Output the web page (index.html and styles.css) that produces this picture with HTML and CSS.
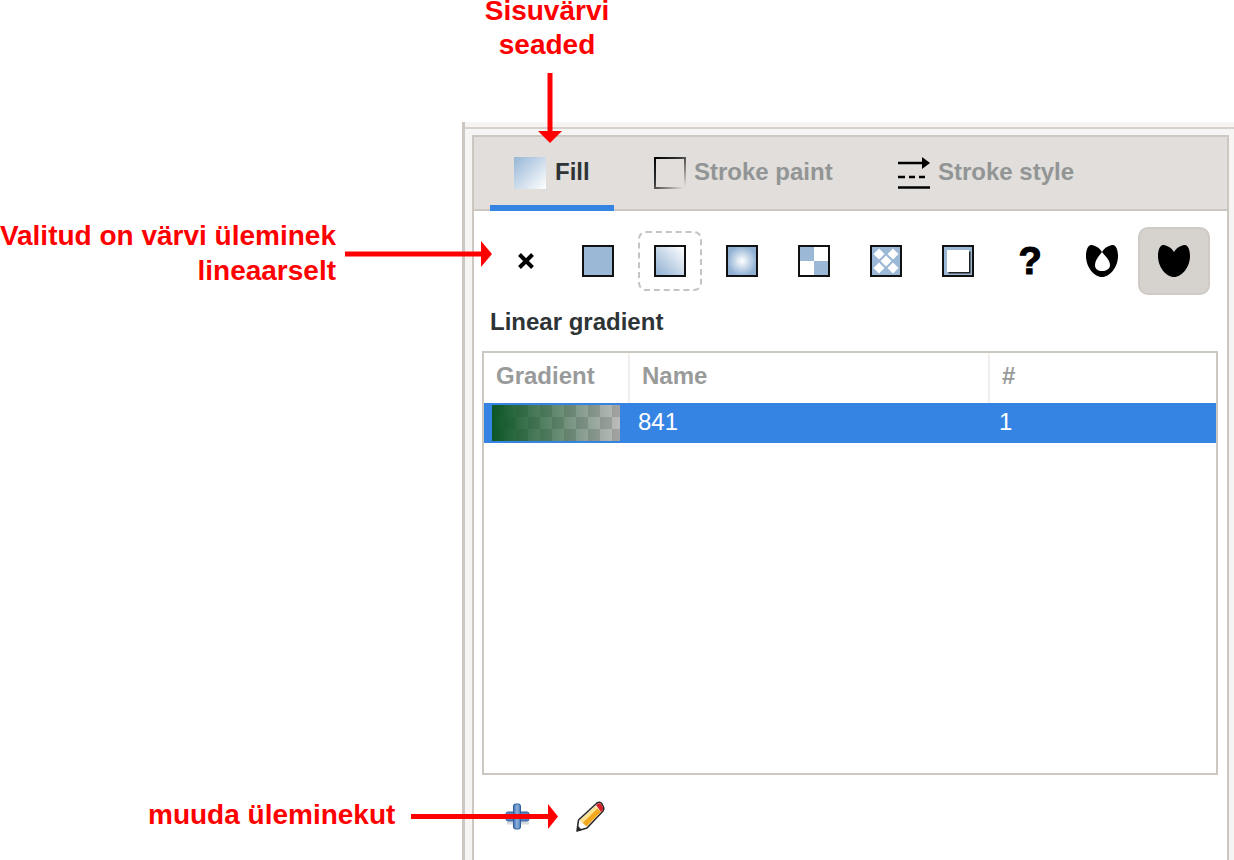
FILE: index.html
```html
<!DOCTYPE html>
<html lang="en">
<head>
    <meta charset="UTF-8">
    <title>Fill and Stroke</title>
    <link rel="stylesheet" href="styles.css">
</head>
<body>
    <div class="dialog">
        <div class="dialog-top"></div>
        <div class="notebook">
            <div class="tabs">
                <div class="tab active">
                    <span class="tab-icon fill-icon"></span>
                    <span class="tab-label">Fill</span>
                </div>
                <div class="tab">
                    <span class="tab-icon stroke-icon"></span>
                    <span class="tab-label">Stroke paint</span>
                </div>
                <div class="tab">
                    <svg class="tab-icon" viewBox="0 0 32 32">
                        <path d="M0 6H25" stroke="#000" stroke-width="2.500"/>
                        <path d="M24 0L32 6L24 12Z" fill="#000"/>
                        <path d="M0 20H7M11 20H17M21 20H27" stroke="#000" stroke-width="2.500"/>
                        <path d="M0 30.500H32" stroke="#000" stroke-width="2.500"/>
                    </svg>
                    <span class="tab-label">Stroke style</span>
                </div>
            </div>

            <div class="content">
                <div class="paint-row">
                    <div class="paint-btn">
                        <svg class="icon" viewBox="0 0 32 32">
                            <path d="M9.500 9.500L22.500 22.500M22.500 9.500L9.500 22.500" stroke="#000" stroke-width="4"/>
                        </svg>
                    </div>
                    <div class="paint-btn"><span class="swatch flat"></span></div>
                    <div class="paint-btn focused"><span class="swatch linear"></span></div>
                    <div class="paint-btn"><span class="swatch radial"></span></div>
                    <div class="paint-btn"><span class="swatch pattern"></span></div>
                    <div class="paint-btn">
                        <svg class="icon" viewBox="0 0 32 32">
                            <rect x="1" y="1" width="30" height="30" fill="#9bb8d7"/>
                            <path d="M3.500 9L9 3.500L14.500 9L9 14.500ZM17.500 9L23 3.500L28.500 9L23 14.500ZM10.500 16L16 10.500L21.500 16L16 21.500ZM3.500 23L9 17.500L14.500 23L9 28.500ZM17.500 23L23 17.500L28.500 23L23 28.500Z" fill="#fff"/>
                            <rect x="1" y="1" width="30" height="30" fill="none" stroke="#111" stroke-width="2"/>
                        </svg>
                    </div>
                    <div class="paint-btn"><span class="swatch flat framed"><span class="inner"></span></span></div>
                    <div class="paint-btn"><span class="unknown">?</span></div>
                    <div class="paint-btn">
                        <svg class="icon" viewBox="0 0 32 32">
                            <path fill-rule="evenodd" d="M16 7C13 2 8 0 5 0C2 0 0 5 0 11C0 22 8 32 16 32C24 32 32 22 32 11C32 5 30 0 27 0C24 0 19 2 16 7ZM16 7C19 11 24 15 24 20C24 24 20 26 16 26C12 26 9 24 9 20C9 15 13 11 16 7Z"/>
                        </svg>
                    </div>
                    <div class="paint-btn selected">
                        <svg class="icon" viewBox="0 0 32 32">
                            <path d="M16 7C13 2 8 0 5 0C2 0 0 5 0 11C0 22 8 32 16 32C24 32 32 22 32 11C32 5 30 0 27 0C24 0 19 2 16 7Z"/>
                        </svg>
                    </div>
                </div>

                <h2 class="section-title">Linear gradient</h2>

                <div class="list">
                    <div class="list-head">
                        <div>Gradient</div>
                        <div>Name</div>
                        <div>#</div>
                    </div>
                    <div class="list-row">
                        <div><span class="gradient-preview"></span></div>
                        <div class="cell-text">841</div>
                        <div class="cell-text">1</div>
                    </div>
                </div>

                <div class="actions">
                    <svg class="icon" viewBox="0 0 32 32">
                        <defs>
                            <linearGradient id="plusBlue" x1="0" y1="0" x2="1" y2="0">
                                <stop offset="0" stop-color="#3f6fb0"/>
                                <stop offset="0.5" stop-color="#8fb2dc"/>
                                <stop offset="1" stop-color="#4a7ab8"/>
                            </linearGradient>
                        </defs>
                        <path d="M5 22H27" stroke="#8a93a0" stroke-width="3" opacity="0.35"/>
                        <rect x="4" y="11" width="23" height="9" rx="2" fill="#5c86bd" stroke="#2f5f9f"/>
                        <rect x="11.500" y="3" width="7" height="25" rx="2" fill="url(#plusBlue)" stroke="#2f5f9f"/>
                    </svg>
                    <svg class="icon" viewBox="0 0 32 32">
                        <path d="M3 30L4.500 19L23 2Q26 0 28 3L29.500 6Q30.500 8 29 10L13 27Z" fill="#fff" stroke="#2a2a2a" stroke-width="1.600" stroke-linejoin="round"/>
                        <path d="M6 19.500L21.500 5.500L27 11L12.500 25.500Z" fill="#f3a91f"/>
                        <path d="M6 19.500L21.500 5.500L23.500 7.500L8.500 22Z" fill="#fde392"/>
                        <path d="M22 4L24 2.500Q26 1.500 27.500 3.500L29 6.500Q29.500 8 28.500 9.500L27 11Z" fill="#d8202a"/>
                        <path d="M3 30L4 25L8 29Z" fill="#2a2a2a"/>
                    </svg>
                </div>
            </div>
        </div>
    </div>

    <!-- Annotations on top of the screenshot -->
    <div class="note note-top"><span>Sisuvärvi</span><span>seaded</span></div>
    <div class="note note-left">Valitud on värvi üleminek<br>lineaarselt</div>
    <div class="note note-bottom">muuda üleminekut</div>
    <svg class="arrows" viewBox="0 0 1234 860">
        <path d="M550 73V131" stroke="#f00" stroke-width="5"/>
        <path d="M538 131H562L550 143Z" fill="#f00"/>
        <path d="M345 254H481" stroke="#f00" stroke-width="5"/>
        <path d="M481 241L492 254L481 267Z" fill="#f00"/>
        <path d="M411 816.500H549" stroke="#f00" stroke-width="5"/>
        <path d="M548 804L558 816.500L548 829Z" fill="#f00"/>
    </svg>
</body>
</html>
```

FILE: styles.css
```css
html, body {
    margin: 0;
    height: 860px;
    overflow: hidden;
    background-color: white;
}

body {
    font-family: 'Liberation Sans', Arial, sans-serif;
    font-size: 24px;
    color: #2e3436;
    position: relative;
}

.dialog {
    margin: 122px 0 0 462px;
    height: 738px;
    overflow: hidden;
    background-color: #f6f5f4;
    border-left: 3px solid #cdc7c2;
}

.dialog-top {
    height: 5px;
    border-bottom: 2px solid #d6d1cc;
    margin-bottom: 6px;
}

.notebook {
    width: 753px;
    height: 760px;
    margin-left: 7px;
    background-color: white;
    border: 2px solid #cdc7c2;
}

/* Tabs */
.tabs {
    display: flex;
    gap: 17.3px;
    padding-left: 16px;
    height: 72px;
    background-color: #e1dedb;
    border-bottom: 2px solid #cdc7c2;
}

.tab {
    display: flex;
    align-items: center;
    gap: 8px;
    height: 32px;
    padding: 20px 24px 16px;
    border-bottom: 6px solid transparent;
    font-weight: bold;
    color: #929595;
}

.tab.active {
    gap: 9px;
    margin-right: -1px;
    color: #2e3436;
    border-bottom-color: #3584e4;
}

.tab-label {
    margin-bottom: 2px;
}

.tab-icon {
    display: block;
    width: 32px;
    height: 32px;
    flex-shrink: 0;
    box-sizing: border-box;
}

.fill-icon {
    background: linear-gradient(to bottom right, #97b6d6, #ffffff);
}

.stroke-icon {
    border: 2px solid;
    border-image: linear-gradient(to bottom right, #000000, #333333 40%, #dddad7 95%) 1;
}

/* Paint type buttons */
.content {
    padding: 16px 0 0 8px;
}

.paint-row {
    display: flex;
    margin-left: 8px;
}

.paint-btn {
    width: 72px;
    height: 68px;
    box-sizing: border-box;
    display: flex;
    align-items: center;
    justify-content: center;
    position: relative;
}

.paint-btn.focused::after {
    content: '';
    position: absolute;
    top: 4px;
    bottom: 4px;
    left: 4px;
    right: 4px;
    border: 2px dashed #c4c4c4;
    border-radius: 8px;
}

.paint-btn.selected {
    background-color: #d6d2ce;
    border: 2px solid #cfcac6;
    border-radius: 10px;
}

.icon {
    display: block;
    width: 32px;
    height: 32px;
}

.swatch {
    display: block;
    width: 32px;
    height: 32px;
    box-sizing: border-box;
    border: 2px solid #111;
}

.flat {
    background-color: #9bb8d7;
}

.linear {
    background: linear-gradient(to top right, #90b0d2, #ffffff);
}

.radial {
    background: radial-gradient(circle, #ffffff, #8fb0d3 75%);
}

.pattern {
    background:
        linear-gradient(#9bb8d7, #9bb8d7) 0 0 / 14px 14px no-repeat,
        linear-gradient(#9bb8d7, #9bb8d7) 14px 14px / 14px 14px no-repeat,
        white;
}

.framed {
    padding: 3px;
}

.inner {
    display: block;
    width: 22px;
    height: 22px;
    background-color: white;
    box-shadow: 1.5px 1.5px 0 #222;
}

.unknown {
    font-family: 'Liberation Sans', sans-serif;
    font-weight: bold;
    font-size: 38px;
    line-height: 32px;
    color: black;
    -webkit-text-stroke: 1.2px black;
}

.section-title {
    margin: 13px 0 15px 8px;
    font-size: 24px;
    line-height: 28px;
    font-weight: bold;
}

/* Gradient list */
.list {
    width: 732px;
    height: 420px;
    background-color: white;
    border: 2px solid #cdc7c2;
}

.list-head,
.list-row {
    display: grid;
    grid-template-columns: 146px 360px 1fr;
    align-items: center;
}

.list-head {
    height: 50px;
    font-weight: bold;
    color: #999b9b;
}

.list-head div {
    height: 50px;
    line-height: 46px;
    padding-left: 12px;
    box-sizing: border-box;
    border-right: 2px solid #f0efee;
}

.list-head div:last-child {
    border-right: none;
    padding-left: 12px;
}

.list-row {
    height: 40px;
    background-color: #3584e4;
    color: white;
}

.list-row div {
    padding-left: 8px;
}

.list-row .cell-text {
    padding-bottom: 2px;
}

.list-row div:last-child {
    padding-left: 9px;
}

.gradient-preview {
    display: block;
    width: 128px;
    height: 36px;
    background:
        linear-gradient(to right, #0c5726, rgba(12, 87, 38, 0)),
        repeating-conic-gradient(#bcbcbc 0 25%, #a3a3a3 0 50%) 0 0 / 24px 24px;
}

.actions {
    display: flex;
    gap: 40px;
    margin: 26px 0 0 20px;
}

/* Annotations */
.note {
    position: absolute;
    font-size: 28px;
    line-height: 35px;
    font-weight: bold;
    color: #f00;
}

.note-top {
    top: 0;
    left: 447px;
    width: 200px;
    text-align: center;
}

.note-top span {
    display: block;
    line-height: 22px;
}

.note-top span + span {
    margin-top: 12px;
}

.note-left {
    top: 218px;
    right: 898px;
    text-align: right;
    white-space: nowrap;
}

.note-bottom {
    top: 797px;
    left: 148px;
    white-space: nowrap;
}

.arrows {
    position: absolute;
    top: 0;
    left: 0;
    width: 1234px;
    height: 860px;
}
```
